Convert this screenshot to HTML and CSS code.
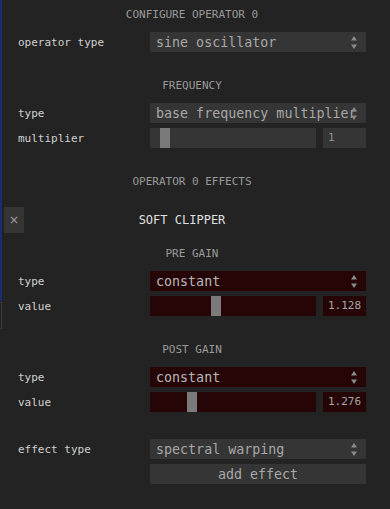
FILE: index.html
```html
<!DOCTYPE html>
<html>
<head>
<meta charset="utf-8">
<link rel="stylesheet" href="styles.css">
</head>
<body>
<div class="edge"></div>
<div class="edge-box"></div>
<main class="panel">
  <h2 class="heading first">CONFIGURE OPERATOR 0</h2>
  <div class="rows">
    <div class="row">
      <span class="label">operator type</span>
      <div class="select"><span class="sel-text">sine oscillator</span><svg class="arrow" width="6" height="13" viewBox="0 0 6 13"><path d="M3 0 L6 4.5 L0 4.5 Z M0 8.5 L6 8.5 L3 13 Z" fill="#8a8a8a"/></svg></div>
    </div>
  </div>

  <h2 class="heading">FREQUENCY</h2>
  <div class="rows">
    <div class="row">
      <span class="label">type</span>
      <div class="select"><span class="sel-text">base frequency multiplier</span><svg class="arrow" width="6" height="13" viewBox="0 0 6 13"><path d="M3 0 L6 4.5 L0 4.5 Z M0 8.5 L6 8.5 L3 13 Z" fill="#8a8a8a"/></svg></div>
    </div>
    <div class="row">
      <span class="label">multiplier</span>
      <div class="slider-group">
        <div class="slider"><div class="thumb" style="margin-left:10px"></div></div>
        <div class="num">1</div>
      </div>
    </div>
  </div>

  <h2 class="heading">OPERATOR 0 EFFECTS</h2>
  <div class="effect-head">
    <button class="close">×</button>
    <div class="effect-title">SOFT CLIPPER</div>
  </div>

  <h2 class="heading sub">PRE GAIN</h2>
  <div class="rows">
    <div class="row">
      <span class="label">type</span>
      <div class="select red"><span class="sel-text">constant</span><svg class="arrow" width="6" height="13" viewBox="0 0 6 13"><path d="M3 0 L6 4.5 L0 4.5 Z M0 8.5 L6 8.5 L3 13 Z" fill="#8a8a8a"/></svg></div>
    </div>
    <div class="row">
      <span class="label">value</span>
      <div class="slider-group">
        <div class="slider red"><div class="thumb" style="margin-left:61px"></div></div>
        <div class="num red">1.128</div>
      </div>
    </div>
  </div>

  <h2 class="heading">POST GAIN</h2>
  <div class="rows">
    <div class="row">
      <span class="label">type</span>
      <div class="select red"><span class="sel-text">constant</span><svg class="arrow" width="6" height="13" viewBox="0 0 6 13"><path d="M3 0 L6 4.5 L0 4.5 Z M0 8.5 L6 8.5 L3 13 Z" fill="#8a8a8a"/></svg></div>
    </div>
    <div class="row">
      <span class="label">value</span>
      <div class="slider-group">
        <div class="slider red"><div class="thumb" style="margin-left:37px"></div></div>
        <div class="num red">1.276</div>
      </div>
    </div>
  </div>

  <div class="rows add">
    <div class="row">
      <span class="label">effect type</span>
      <div class="select"><span class="sel-text">spectral warping</span><svg class="arrow" width="6" height="13" viewBox="0 0 6 13"><path d="M3 0 L6 4.5 L0 4.5 Z M0 8.5 L6 8.5 L3 13 Z" fill="#8a8a8a"/></svg></div>
    </div>
    <div class="row">
      <span class="label"></span>
      <button class="add-btn">add effect</button>
    </div>
  </div>
</main>
</body>
</html>
```
FILE: styles.css
```css
html, body {
  margin: 0;
  padding: 0;
  background: #232323;
  height: 100%;
  overflow: hidden;
}
body {
  position: relative;
  font-family: "DejaVu Sans Mono", monospace;
  color: #cfcfcf;
}
.edge {
  position: absolute;
  left: 0;
  top: 0;
  width: 2px;
  height: 301px;
  background: #1c2a70;
}
.edge-box {
  position: absolute;
  left: -6px;
  top: 302px;
  width: 6px;
  height: 25px;
  border: 1px solid #3c3c3c;
  background: #1e1e1e;
}
.panel {
  width: 390px;
}
.heading {
  margin: 27px 0 0 0;
  padding-right: 6px;
  height: 14px;
  line-height: 14px;
  font-size: 11px;
  font-weight: normal;
  text-align: center;
  color: #9a9a9a;
}
.heading.first {
  margin-top: 8px;
}
.heading.sub {
  margin-top: 14px;
}
.rows {
  display: flex;
  flex-direction: column;
  gap: 5px;
  margin-top: 10px;
  padding-left: 18px;
}
.rows.add {
  margin-top: 27px;
}
.row {
  display: grid;
  grid-template-columns: 132px 216px;
  align-items: center;
  height: 20px;
}
.label {
  font-size: 11px;
  color: #d0d0d0;
}
.select {
  position: relative;
  height: 20px;
  background: #353535;
  overflow: hidden;
  display: flex;
  align-items: center;
}
.select.red,
.slider.red,
.num.red {
  background: #250506;
}
.sel-text {
  padding-left: 6px;
  font-size: 13.33px;
  color: #a8a8a8;
  white-space: nowrap;
}
.select.red .sel-text {
  color: #b8b8b8;
}
.arrow {
  position: absolute;
  right: 9px;
  top: 4px;
}
.slider-group {
  display: flex;
  gap: 7px;
  height: 20px;
}
.slider {
  width: 166px;
  height: 20px;
  background: #353535;
  display: flex;
}
.thumb {
  width: 10px;
  height: 20px;
  background: #7a7a7a;
}
.num {
  width: 43px;
  height: 20px;
  box-sizing: border-box;
  padding-left: 5px;
  line-height: 20px;
  font-size: 11px;
  color: #8e8e8e;
  background: #353535;
}
.num.red {
  color: #a8a8a8;
}
.effect-head {
  display: flex;
  align-items: center;
  margin-top: 18px;
  padding-left: 4px;
  padding-right: 50px;
  height: 26px;
}
.close {
  width: 20px;
  height: 26px;
  padding: 0;
  border: none;
  background: #353535;
  color: #a0a0a0;
  font-family: "DejaVu Sans", sans-serif;
  font-size: 12px;
  line-height: 26px;
}
.effect-title {
  flex: 1;
  text-align: center;
  font-size: 12px;
  color: #e0e0e0;
}
.add-btn {
  height: 20px;
  width: 216px;
  padding: 0;
  border: none;
  background: #353535;
  color: #a8a8a8;
  font-family: "DejaVu Sans Mono", monospace;
  font-size: 13.33px;
}
```
